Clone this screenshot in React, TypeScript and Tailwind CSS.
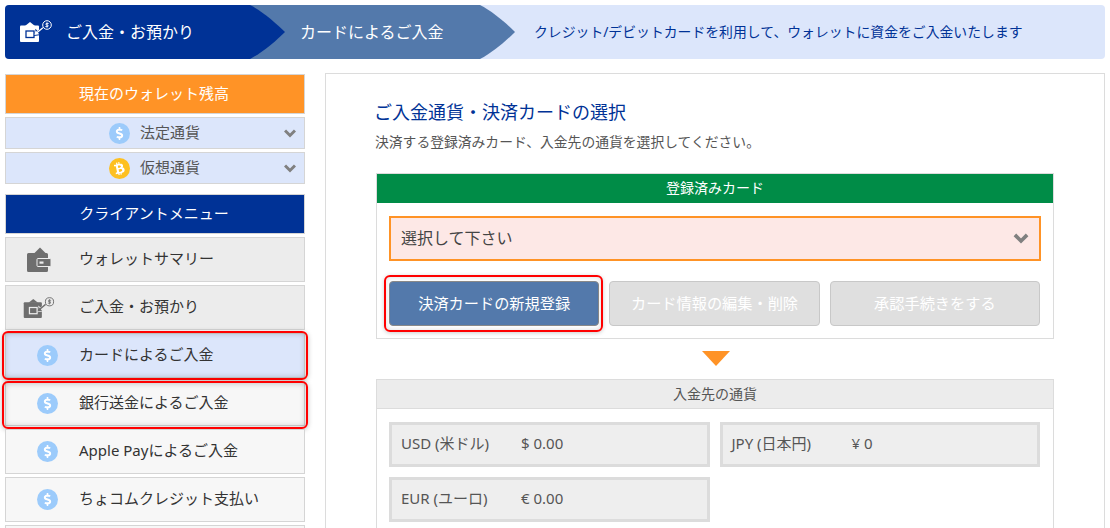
import React from "react";
import { FaBtc, FaDollarSign } from "react-icons/fa";

const FONT = { fontFamily: '"Noto Sans", "Noto Sans CJK JP", sans-serif' };

function Chevron({ className }: { className?: string }) {
  return (
    <svg viewBox="0 0 12 9" className={className} fill="none" stroke="currentColor" strokeWidth="3">
      <path d="M1 1.5 6 6.5 11 1.5" />
    </svg>
  );
}

function WalletIcon({ className }: { className?: string }) {
  return (
    <svg viewBox="0 0 24 25" className={className} fill="currentColor">
      <path d="M7 6.5 13 0.5 19 6.5Z" />
      <path d="M1.5 6h18a1.5 1.5 0 0 1 1.5 1.500V23.500a1.500 1.500 0 0 1-1.500 1.500h-18A1.500 1.500 0 0 1 0 23.500V7.500A1.500 1.500 0 0 1 1.500 6Z" />
      <rect x="10" y="11.500" width="14" height="8" rx="1" stroke="#ececec" />
      <rect x="12.500" y="14.500" width="4" height="2.200" fill="#ececec" />
    </svg>
  );
}

function DepositIcon({ className, cut }: { className?: string; cut: string }) {
  return (
    <svg viewBox="0 0 32 22" className={className} fill="currentColor">
      <path d="M5 6 10 2 15 6Z" />
      <rect x="0" y="5.500" width="19" height="16.500" rx="1" />
      <rect x="6" y="11" width="8" height="6.500" fill="none" stroke={cut} strokeWidth="1.300" />
      <path d="m23.500 6-6 5-2-2.200-1.500 7.200 7.200-1-2-2.100 6-5Z" fill={cut} />
      <path d="m22.500 7.200-5.500 4.600-1.500-1.500-1 4.800 4.800-.8-1.400-1.500 5.400-4.500Z" />
      <circle cx="27" cy="5" r="4.300" fill="none" stroke="currentColor" strokeWidth="1" />
      <path d="M28.700 3.500h-2.700v1.500h2v1.500h-2.700M27 2.200v5.600" fill="none" stroke="currentColor" strokeWidth="0.800" />
    </svg>
  );
}

function Coin() {
  return (
    <span className="w-[21px] h-[21px] rounded-full bg-[#9ccbfb] flex items-center justify-center shrink-0">
      <FaDollarSign className="w-[13px] h-[13px] text-white" />
    </span>
  );
}

function BitCoin() {
  return (
    <span className="w-[21px] h-[21px] rounded-full bg-[#fdc021] flex items-center justify-center shrink-0">
      <FaBtc className="w-[13px] h-[13px] text-white -rotate-12" />
    </span>
  );
}

function BalanceRow({ label, coin }: { label: string; coin: React.ReactNode }) {
  return (
    <div className="relative h-[32px] bg-[#dce6fb] border border-[#d5d5d5] flex items-center pl-[103px] gap-[10px] text-[15px] text-[#555]">
      {coin}
      <span className="pb-[2px]">{label}</span>
      <Chevron className="absolute right-[8px] top-[11px] w-[12px] h-[9px] text-[#808080]" />
    </div>
  );
}

function MenuHead({ label, bg }: { label: string; bg: string }) {
  return (
    <div className={`h-[40px] border border-[#d5d5d5] flex items-center justify-center pb-[2px] pr-[2px] text-[15px] text-white ${bg}`}>
      {label}
    </div>
  );
}

const DEPOSIT_ITEMS = [
  { label: "カードによるご入金", bg: "bg-[#dce6fb]", mark: "top-[-3px] bottom-[-3px]" },
  { label: "銀行送金によるご入金", bg: "bg-[#f7f7f7]", mark: "top-[-1px] bottom-[-4px]" },
  { label: "Apple Payによるご入金", bg: "bg-[#f7f7f7]", mark: "" },
  { label: "ちょコムクレジット支払い", bg: "bg-[#f7f7f7]", mark: "" },
];

function MenuRow({ icon, label, bg, mark }: { icon: React.ReactNode; label: string; bg: string; mark?: string }) {
  return (
    <div className={`relative h-[45px] shrink-0 border border-[#d5d5d5] flex items-center pb-[2px] text-[15px] text-[#333] ${bg}`}>
      <span className="w-[73px] flex items-center justify-center shrink-0 pl-[9px] pt-[2px]">{icon}</span>
      <span>{label}</span>
      {mark && (
        <span
          className={`absolute left-[-4px] right-[-4px] border-2 border-[#f00] rounded-[6px] shadow-[0_1px_5px_rgba(0,0,0,0.25),inset_0_0_6px_rgba(0,0,0,0.25)] ${mark}`}
        />
      )}
    </div>
  );
}

function Currency({ code, amount }: { code: string; amount: string }) {
  return (
    <div className="h-[45px] border-[3px] border-[#dcdcdc] bg-[#eeeeee] flex items-center pl-[9px] pb-[2px] text-[15px] text-[#555]">
      <span className="w-[120px] shrink-0">{code}</span>
      <span>{amount}</span>
    </div>
  );
}

export default function App() {
  return (
    <div style={FONT} className="h-[528px] overflow-hidden bg-white px-[5px] pt-[5px]">
      <header className="h-[54px] flex items-stretch rounded-[4px] overflow-hidden bg-[#dce6fb]">
        <div className="w-[245px] bg-[#003296] flex items-center pl-[15px] text-white text-[16px]">
          <DepositIcon className="w-[32px] h-[22px] mr-[14px] -mt-[3px] shrink-0" cut="#003296" />
          <span>ご入金・お預かり</span>
        </div>
        <svg viewBox="0 0 35 54" className="w-[35px] h-[54px] shrink-0 bg-[#5379ab]">
          <path d="M0 0C12 6 26 18 35 27 26 36 12 48 0 54Z" fill="#003296" />
        </svg>
        <div className="w-[195px] bg-[#5379ab] flex items-center pl-[15px] text-white text-[16px]">カードによるご入金</div>
        <svg viewBox="0 0 35 54" className="w-[35px] h-[54px] shrink-0">
          <path d="M0 0C12 6 26 18 35 27 26 36 12 48 0 54Z" fill="#5379ab" />
        </svg>
        <div className="flex items-center pl-[19px] text-[13.85px] text-[#003296]">
          クレジット/デビットカードを利用して、ウォレットに資金をご入金いたします
        </div>
      </header>

      <div className="flex gap-[20px] mt-[14px]">
        <aside className="w-[300px] shrink-0 pt-[1px]">
          <div className="flex flex-col gap-[3px]">
            <MenuHead label="現在のウォレット残高" bg="bg-[#ff9326]" />
            <BalanceRow label="法定通貨" coin={<Coin />} />
            <BalanceRow label="仮想通貨" coin={<BitCoin />} />
          </div>
          <div className="flex flex-col gap-[3px] mt-[10px]">
            <MenuHead label="クライアントメニュー" bg="bg-[#003296]" />
            <MenuRow
              icon={<WalletIcon className="w-[24px] h-[25px] text-[#6e6e6e] -ml-[16px] shrink-0" />}
              label="ウォレットサマリー"
              bg="bg-[#ececec]"
            />
            <MenuRow
              icon={<DepositIcon className="w-[32px] h-[21px] text-[#6e6e6e] -ml-[17px] shrink-0" cut="#ececec" />}
              label="ご入金・お預かり"
              bg="bg-[#ececec]"
            />
            {DEPOSIT_ITEMS.map((item) => (
              <MenuRow key={item.label} icon={<Coin />} label={item.label} bg={item.bg} mark={item.mark} />
            ))}
            <div className="h-[45px] shrink-0 border border-[#d5d5d5] bg-[#f7f7f7]" />
          </div>
        </aside>

        <main className="flex-1 h-[500px] border border-[#dcdcdc] px-[50px] pt-[23px]">
          <h1 className="text-[18px] leading-[30px] -ml-[2px] text-[#003296]">ご入金通貨・決済カードの選択</h1>
          <p className="text-[13.8px] leading-[20px] mt-[5px] -ml-[1px] text-[#555]">決済する登録済みカード、入金先の通貨を選択してください。</p>

          <section className="mt-[21px] border border-[#dcdcdc]">
            <div className="h-[29px] bg-[#008c47] flex items-center justify-center pb-[2px] text-[14px] text-white">登録済みカード</div>
            <div className="px-[12px] pt-[13px] pb-[12px]">
              <div className="relative h-[45px] border-2 border-[#ff9326] bg-[#fde8e6] flex items-center pl-[10px] pb-[2px] text-[16px] text-[#444]">
                選択して下さい
                <Chevron className="absolute right-[10px] top-[15px] w-[16px] h-[11px] text-[#808080]" />
              </div>
              <div className="flex gap-[10px] mt-[20px] pr-[1px]">
                <button className="relative flex-1 h-[45px] rounded-[4px] bg-[#5379ab] border border-[#8a8a8a] text-[15.2px] text-white">
                  決済カードの新規登録
                  <span className="absolute left-[-6px] right-[-5px] top-[-7px] bottom-[-7px] border-2 border-[#f00] rounded-[6px] shadow-[0_1px_4px_rgba(0,0,0,0.2),inset_0_0_5px_rgba(0,0,0,0.15)]" />
                </button>
                <button className="flex-1 h-[45px] rounded-[4px] bg-[#dfdfdf] border border-[#c8c8c8] text-[15.2px] text-white">カード情報の編集・削除</button>
                <button className="flex-1 h-[45px] rounded-[4px] bg-[#dfdfdf] border border-[#c8c8c8] text-[15.2px] text-white">承認手続きをする</button>
              </div>
            </div>
          </section>

          <div className="flex justify-center mt-[12px] mb-[13px] pl-[2px]">
            <span className="w-0 h-0 border-x-[14px] border-x-transparent border-t-[15px] border-t-[#ff9326]" />
          </div>

          <section className="border border-[#dcdcdc] h-[160px]">
            <div className="h-[29px] bg-[#ececec] border-b border-[#dcdcdc] flex items-center justify-center pb-[2px] text-[14px] text-[#555]">入金先の通貨</div>
            <div className="grid grid-cols-2 gap-x-[10px] gap-y-[10px] pl-[12px] pr-[13px] pt-[13px]">
              <Currency code="USD (米ドル)" amount="$ 0.00" />
              <Currency code="JPY (日本円)" amount="¥ 0" />
              <Currency code="EUR (ユーロ)" amount="€ 0.00" />
            </div>
          </section>
        </main>
      </div>
    </div>
  );
}
